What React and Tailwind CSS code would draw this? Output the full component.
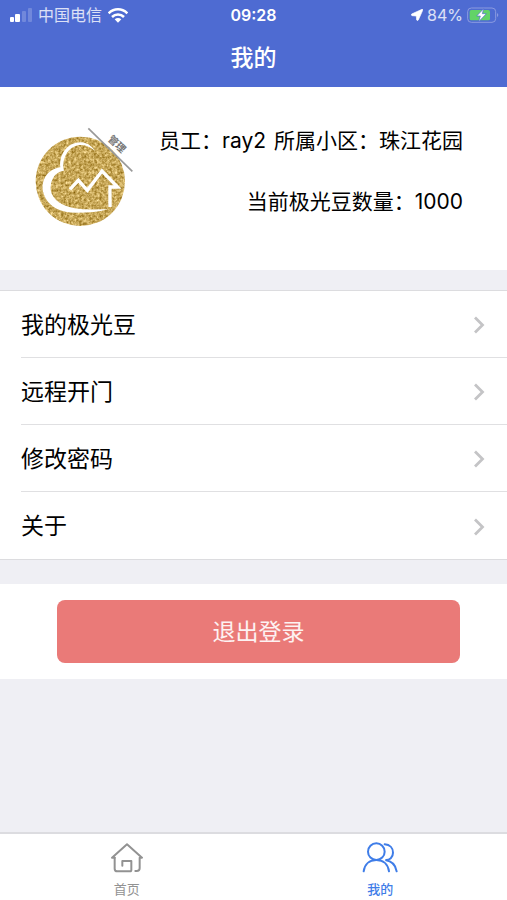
import React, { useState } from 'react';

const menu = ['我的极光豆', '远程开门', '修改密码', '关于'];

function SignalIcon() {
  return (
    <svg className="w-6 h-4" viewBox="0 0 24 16" fill="#fff" aria-hidden="true">
      <rect x="2" y="10" width="4" height="5" rx="1" />
      <rect x="7" y="7" width="5" height="8" rx="1" />
      <rect x="14" y="4" width="4" height="11" rx="1" opacity="0.2" />
      <rect x="20" y="1" width="4" height="14" rx="1" opacity="0.2" />
    </svg>
  );
}

function WifiIcon() {
  return (
    <svg className="w-5 h-4" viewBox="0 0 60 48" fill="none" stroke="#fff" strokeWidth="7.5" aria-hidden="true">
      <path d="M2 19 C18 3 42 3 58 19" />
      <path d="M12 30 C22 20 38 20 48 30" />
      <path d="M20 37 Q30 29 40 37 L30 47 Z" fill="#fff" stroke="none" />
    </svg>
  );
}

function LocationIcon() {
  return (
    <svg className="w-3 h-3" viewBox="0 0 36 36" fill="#fff" aria-hidden="true">
      <path d="M33 1 L2 15 Q-1 18 3 20 L16 21 L17 33 Q19 37 22 33 L35 4 Q37 0 33 1 Z" stroke="#fff" strokeWidth="2" />
    </svg>
  );
}

function BatteryIcon() {
  return (
    <svg className="w-8 h-4" viewBox="0 0 96 48" fill="none" aria-hidden="true">
      <rect x="2" y="3" width="84" height="43" rx="11" stroke="#8b9be0" strokeWidth="3" />
      <path d="M90 18 Q98 24 90 31 Z" fill="#8b9be0" />
      <rect x="8" y="9" width="61" height="31" rx="5" fill="#62d367" />
      <path d="M50 5 L29 27 H40 L35 44 L58 20 H46 Z" fill="#fff" stroke="#4e6bd2" strokeWidth="2" />
    </svg>
  );
}

function Logo() {
  return (
    <svg className="w-[130px] h-[120px] shrink-0" viewBox="0 0 390 360" role="img" aria-label="管理">
      <defs>
        <filter id="glitter" x="0" y="0" width="100%" height="100%" colorInterpolationFilters="sRGB">
          <feTurbulence type="fractalNoise" baseFrequency="0.13" numOctaves="3" seed="4" />
          <feColorMatrix values="0.6 0 0 0 0.48  0.65 0 0 0 0.33  0.75 0 0 0 -0.03  0 0 0 0 1" />
          <feComposite in2="SourceGraphic" operator="in" />
        </filter>
      </defs>
      <circle cx="181" cy="199" r="134" fill="#c9a752" filter="url(#glitter)" />
      <path
        d="M224 107 C202 70 151 76 130 112 C121 128 119 145 121 157 C78 164 60 202 71 236 C84 277 124 294 174 293 C206 293 237 291 263 283 C220 283 174 286 139 273 C105 260 87 237 93 207 C98 183 112 169 132 167 C127 148 131 124 146 107 C166 84 199 85 224 107 Z"
        fill="#fff"
      />
      <path d="M150 223 L175 196 L202 226 L246 168 L293 216 H270 V276" fill="none" stroke="#fff" strokeWidth="10" />
      <path d="M205 40 L337 169" stroke="#999" strokeWidth="5" />
      <text
        transform="translate(262 74) rotate(44)"
        fill="#777"
        fontSize="30"
        fontWeight="700"
        fontFamily="'Noto Sans CJK SC', sans-serif"
      >
        管理
      </text>
    </svg>
  );
}

function Chevron() {
  return (
    <svg className="w-3 h-5" viewBox="0 0 12 20" fill="none" stroke="#c4c4c6" strokeWidth="2.8" aria-hidden="true">
      <path d="M2 2.5 L9.5 10 L2 17.5" />
    </svg>
  );
}

function HomeIcon() {
  return (
    <svg className="w-8 h-8" viewBox="0 0 96 96" fill="none" stroke="currentColor" strokeWidth="6" strokeLinejoin="round" strokeLinecap="round" aria-hidden="true">
      <path d="M11 47 L3 47 L48 7 L93 47 H86 V79 Q86 87 77 87 H73" />
      <path d="M11 47 V80 Q11 88 19 88 H57 Q61 88 61 83 V57 H34 V71" />
    </svg>
  );
}

function UsersIcon() {
  return (
    <svg className="w-9 h-8" viewBox="0 0 108 96" fill="none" stroke="currentColor" strokeWidth="6" strokeLinecap="round" aria-hidden="true">
      <circle cx="43" cy="29" r="25" />
      <path d="M5 88 C8 66 23 54 43 54 C63 54 78 66 81 88" />
      <path d="M68 7 C84 8 93 18 93 32 C93 46 83 55 70 54 C89 57 101 69 104 88" />
    </svg>
  );
}

const tabs = [
  { id: 'home', label: '首页', Icon: HomeIcon },
  { id: 'mine', label: '我的', Icon: UsersIcon },
];

export default function App() {
  const [tab, setTab] = useState('mine');

  return (
    <div className="min-h-screen flex flex-col bg-[#efeff4] text-black font-['Inter','Noto_Sans_CJK_SC',sans-serif]">
      <header className="bg-[#4e6bd2] text-white">
        <div className="grid grid-cols-[1fr_auto_1fr] items-center h-[30px] px-2 text-[16px] leading-[20px]">
          <div className="flex items-center gap-1.5 text-white/80">
            <SignalIcon />
            <span>中国电信</span>
            <WifiIcon />
          </div>
          <span className="font-semibold">09:28</span>
          <div className="flex items-center justify-end gap-1">
            <LocationIcon />
            <span className="text-white/80">84%</span>
            <BatteryIcon />
          </div>
        </div>
        <h1 className="h-[57px] flex items-center justify-center text-[23px] font-medium">我的</h1>
      </header>

      <main>
        <section className="flex items-start justify-between bg-white h-[183px] pl-5 pr-11 pt-7">
          <Logo />
          <div className="pt-[10px] flex flex-col items-end gap-[29px] text-[21px] leading-[32px] whitespace-nowrap">
            <p className="flex gap-2">
              <span>员工：ray2</span>
              <span>所属小区：珠江花园</span>
            </p>
            <p>当前极光豆数量：1000</p>
          </div>
        </section>

        <ul className="mt-5 bg-white border-y border-[#dcdcdf] pl-[21px]">
          {menu.map((item) => (
            <li key={item} className="h-[67px] border-b border-[#e0e0e2] last:border-b-0">
              <button type="button" className="w-full h-full pt-0.5 flex items-center justify-between pr-[22px] text-[23px]">
                {item}
                <Chevron />
              </button>
            </li>
          ))}
        </ul>

        <div className="mt-6 bg-white pl-[57px] pr-[47px] py-4">
          <button type="button" className="w-full h-[63px] pt-0.5 rounded-lg bg-[#ea7a78] text-white/90 text-[23px]">
            退出登录
          </button>
        </div>
      </main>

      <nav className="mt-auto grid grid-cols-2 h-[68px] bg-white border-t-2 border-[#dcdce0]">
        {tabs.map(({ id, label, Icon }) => (
          <button
            key={id}
            type="button"
            onClick={() => setTab(id)}
            className={`flex flex-col items-center pt-2 gap-1 text-[13px] leading-[22px] ${tab === id ? 'text-[#3f7de8] font-medium' : 'text-[#929292]'}`}
          >
            <Icon />
            {label}
          </button>
        ))}
      </nav>
    </div>
  );
}
